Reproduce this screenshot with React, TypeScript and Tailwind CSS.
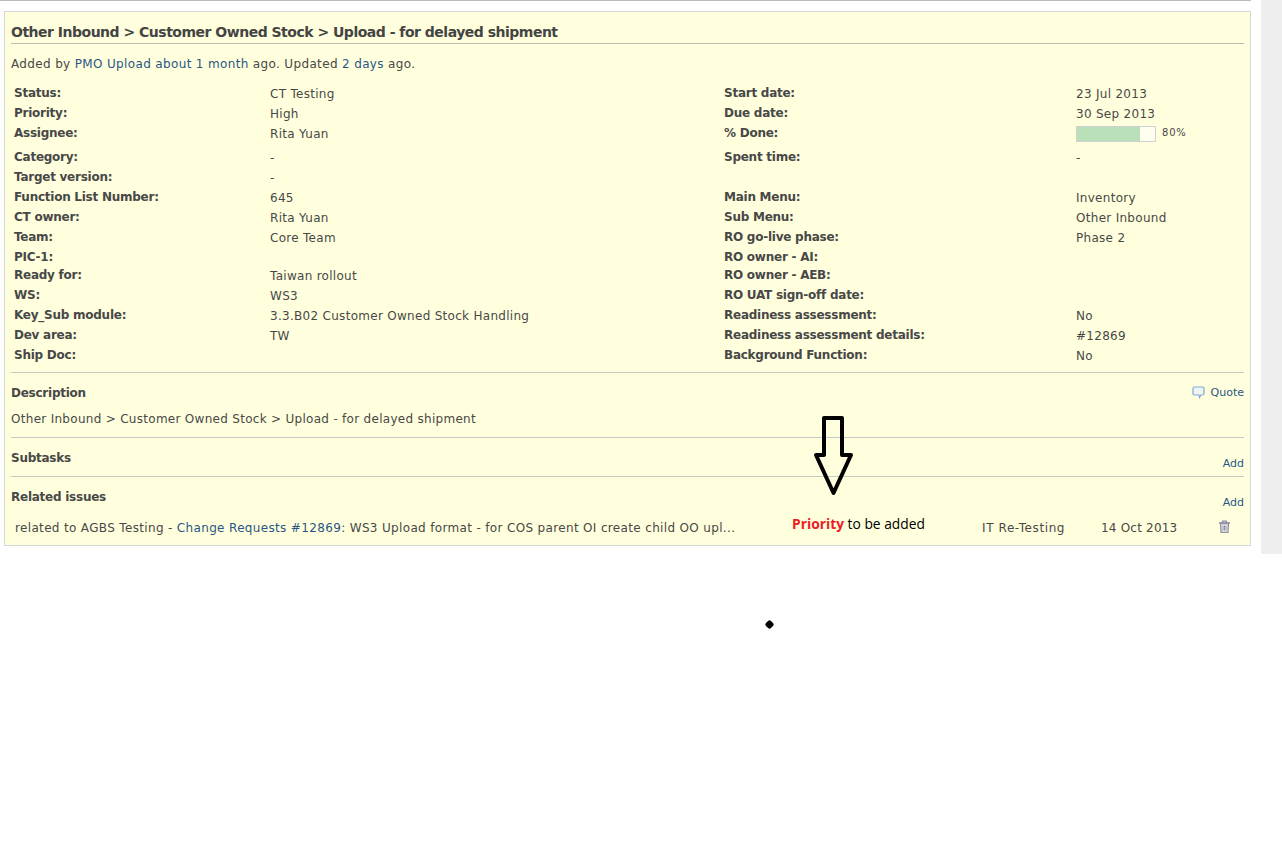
const LEFT_ROWS: [string, string, string, string][] = [
  ['Category:', '-', 'Spent time:', '-'],
  ['Target version:', '-', '', ''],
  ['Function List Number:', '645', 'Main Menu:', 'Inventory'],
  ['CT owner:', 'Rita Yuan', 'Sub Menu:', 'Other Inbound'],
  ['Team:', 'Core Team', 'RO go-live phase:', 'Phase 2'],
  ['PIC-1:', '', 'RO owner - AI:', ''],
  ['Ready for:', 'Taiwan rollout', 'RO owner - AEB:', ''],
  ['WS:', 'WS3', 'RO UAT sign-off date:', ''],
  ['Key_Sub module:', '3.3.B02 Customer Owned Stock Handling', 'Readiness assessment:', 'No'],
  ['Dev area:', 'TW', 'Readiness assessment details:', '#12869'],
  ['Ship Doc:', '', 'Background Function:', 'No'],
];

function Row({ cells, className }: { cells: [string, string, string, string]; className: string }) {
  return (
    <div className={`grid grid-cols-[256px_454px_352px_1fr] ${className}`}>
      <div className="font-bold tracking-[-0.25px]">{cells[0]}</div>
      <div className="pt-px">{cells[1]}</div>
      <div className="font-bold tracking-[-0.25px]">{cells[2]}</div>
      <div className="pt-px">{cells[3]}</div>
    </div>
  );
}

export default function App() {
  return (
    <div className="relative h-[850px] overflow-hidden bg-white font-['DejaVu_Sans',sans-serif] text-[12px] leading-[15px] tracking-[0.29px] text-[#484848]">
      <div className="flex h-[554px]">
        <div className="w-[1251px]">
          <div className="h-px bg-[#bbbbbb]" />
          <div className="mt-[10px] ml-1 h-[535px] border border-[#d7d7d7] bg-[#ffffdd] px-[6px]">
            <h2 className="mt-[12px] h-[20px] border-b border-[#bbbbbb] text-[14px] leading-[17px] font-bold tracking-[-0.5px] text-[#444444]">
              Other Inbound &gt; Customer Owned Stock &gt; Upload - for delayed shipment
            </h2>
            <p className="mt-[13px] h-[15px] tracking-[0.35px]">
              Added by <span className="text-[#2a5685]">PMO Upload</span>{' '}
              <span className="text-[#2a5685]">about 1 month</span> ago. Updated{' '}
              <span className="text-[#2a5685]">2 days</span> ago.
            </p>
            <div className="mt-[14px] pl-[3px]">
              <Row className="h-5" cells={['Status:', 'CT Testing', 'Start date:', '23 Jul 2013']} />
              <Row className="h-5" cells={['Priority:', 'High', 'Due date:', '30 Sep 2013']} />
              <div className="grid h-6 grid-cols-[256px_454px_352px_1fr]">
                <div className="font-bold tracking-[-0.25px]">Assignee:</div>
                <div className="pt-px">Rita Yuan</div>
                <div className="font-bold tracking-[-0.25px]">% Done:</div>
                <div className="flex items-start">
                  <div className="flex h-4 w-20 border border-[#d0d0d0] bg-[#fffff0]">
                    <div className="h-full w-[63px] bg-[#bae0ba]" />
                  </div>
                  <span className="ml-[6px] text-[10px] leading-[13px] tracking-[0.8px]">80%</span>
                </div>
              </div>
              {LEFT_ROWS.map((cells, i) => (
                <Row key={cells[0]} className={i === 5 ? 'h-[18px]' : 'h-5'} cells={cells} />
              ))}
            </div>
            <div className="mt-[4px] h-[65px] border-t border-[#c8c8c8]">
              <div className="mt-[13px] flex h-[15px] justify-between">
                <span className="font-bold tracking-[-0.25px]">Description</span>
                <span className="-mt-[2px] flex items-center text-[11px] tracking-normal text-[#2a5685]">
                  <svg width="13" height="13" viewBox="0 0 13 13" className="mr-[6px]">
                    <path
                      d="M2.500 1h8A1.500 1.500 0 0 1 12 2.500v5A1.500 1.500 0 0 1 10.500 9H9L7.500 11.500L7 9H2.500A1.500 1.500 0 0 1 1 7.500v-5A1.500 1.500 0 0 1 2.500 1z"
                      fill="#f0f4f0"
                      stroke="#7fa8d8"
                      strokeWidth="1.200"
                    />
                  </svg>
                  Quote
                </span>
              </div>
              <p className="mt-[11px]">Other Inbound &gt; Customer Owned Stock &gt; Upload - for delayed shipment</p>
            </div>
            <div className="h-[39px] border-t border-[#c8c8c8]">
              <div className="mt-[13px] flex justify-between">
                <span className="font-bold tracking-[-0.25px]">Subtasks</span>
                <span className="mt-[5px] text-[11px] tracking-normal text-[#2a5685]">Add</span>
              </div>
            </div>
            <div className="border-t border-[#c8c8c8]">
              <div className="mt-[13px] flex justify-between">
                <span className="font-bold tracking-[-0.25px]">Related issues</span>
                <span className="mt-[5px] text-[11px] tracking-normal text-[#2a5685]">Add</span>
              </div>
              <div className="mt-[11px] flex h-[15px] pl-1">
                <div className="w-[967px] whitespace-nowrap tracking-[0.34px]">
                  related to AGBS Testing - <span className="text-[#2a5685]">Change Requests #12869</span>: WS3 Upload format - for COS parent OI create child OO upl...
                </div>
                <div className="w-[119px] tracking-[0.6px]">IT Re-Testing</div>
                <div className="w-[117px] tracking-[0.2px]">14 Oct 2013</div>
                <svg width="13" height="13" viewBox="0 0 13 13" className="-mt-px">
                  <path d="M1 3h11M4.500 3V1.200h4V3" fill="none" stroke="#8f8fa6" strokeWidth="1.300" />
                  <path d="M2.500 3.500l.6 8.800h6.800l.6-8.800z" fill="#eeeeea" stroke="#8f8fa6" strokeWidth="1.300" />
                  <path d="M5 5.500v5M6.500 5.500v5M8 5.500v5" fill="none" stroke="#8f8fa6" />
                </svg>
              </div>
            </div>
          </div>
        </div>
        <div className="ml-[10px] w-[21px] bg-[#eeeeee]" />
      </div>

      {/* hand-drawn annotation on top of the screenshot */}
      <svg width="42" height="82" viewBox="0 0 42 82" className="absolute top-[416px] left-[813px]">
        <path
          d="M11 2H29V39H38L20.5 77L3 39H11Z"
          fill="none"
          stroke="#000000"
          strokeWidth="4"
          strokeLinejoin="round"
        />
      </svg>
      <div className="absolute top-[515px] left-[792px] font-['Open_Sans',sans-serif] text-[13.8px] leading-[18px] tracking-normal text-black">
        <span className="font-bold text-[#ed1c24]">Priority</span> to be added
      </div>
      <div className="absolute top-[621px] left-[766px] h-[7px] w-[7px] rotate-45 rounded-[2px] bg-black" />
    </div>
  );
}
